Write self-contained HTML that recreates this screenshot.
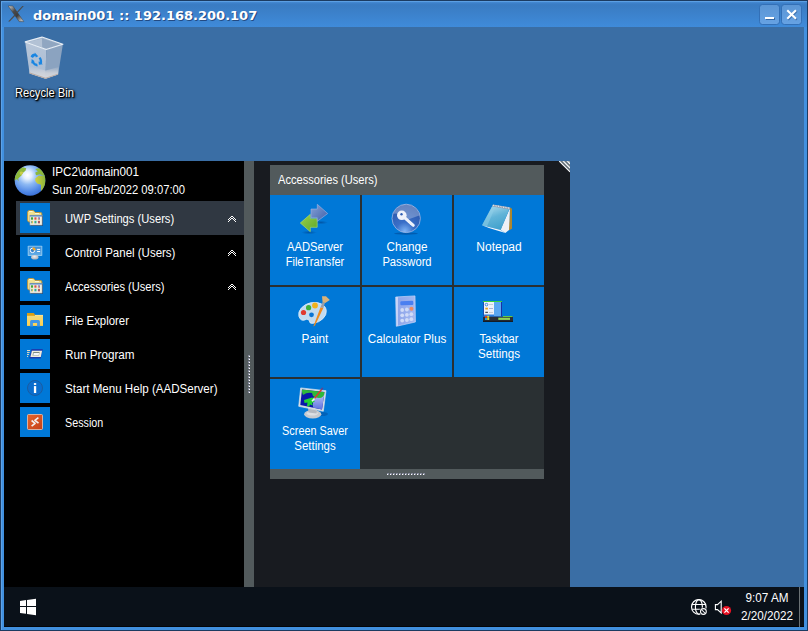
<!DOCTYPE html>
<html>
<head>
<meta charset="utf-8">
<title>domain001 :: 192.168.200.107</title>
<style>
html,body{margin:0;padding:0;}
body{width:808px;height:631px;position:relative;overflow:hidden;background:#1c3b61;font-family:"Liberation Sans",sans-serif;font-size:12px;color:#fff;}
.a{position:absolute;}
.t{white-space:nowrap;}
.c{text-align:center;}
#title{font-family:"DejaVu Sans","Liberation Sans",sans-serif;font-weight:bold;font-size:13px;text-shadow:1px 1px 0 rgba(25,55,105,.75);}
.sh{text-shadow:1px 1px 1px #000,1px 1px 2px #000,0 0 2px #000,1px 1px 3px rgba(0,0,0,.8);}
</style>
</head>
<body>
<div class="a" style="left:1px;top:1px;width:806px;height:629px;background:#5ea2e6;"></div>
<div class="a" style="left:2px;top:2px;width:805px;height:628px;background:#4190df;"></div>
<div class="a" style="left:2px;top:2px;width:805px;height:25px;background:linear-gradient(#4589d3 0px,#3a7dc5 2px,#3a7cc3 4px,#3f8bda 25px);"></div>
<div class="a" style="left:1px;top:1px;width:806px;height:1px;background:#5b9fe3;"></div>
<svg class="a" style="left:6px;top:4px;" width="20" height="20" viewBox="6 4 20 20"><defs><linearGradient id="xg" x1="0" y1="0" x2="1" y2="1"><stop offset="0" stop-color="#d8d8d8"/><stop offset=".35" stop-color="#4a4a4a"/><stop offset=".6" stop-color="#3c3c3c"/><stop offset="1" stop-color="#e0e0e0"/></linearGradient></defs>
<polygon points="8.2,6 12.8,6 23.8,21.6 19.2,21.6" fill="url(#xg)" stroke="#3c3c3c" stroke-width=".5"/>
<polygon points="22.3,6 23.8,6 17,13.4 16.3,12.5" fill="#4c4c4c"/>
<polygon points="14.6,14.6 15.5,15.6 9.7,21.6 8.2,21.6" fill="#4c4c4c"/></svg>
<div class="a t" id="title" style="left:33px;top:8px;line-height:16px;">domain001 :: 192.168.200.107</div>
<div class="a" style="left:759px;top:4px;width:19px;height:19px;background:linear-gradient(#5b96d5,#66a2e3);border:1px solid #3370b7;border-radius:3.5px;"></div>
<div class="a" style="left:781px;top:4px;width:19px;height:19px;background:linear-gradient(#5b96d5,#66a2e3);border:1px solid #3370b7;border-radius:3.5px;"></div>
<svg class="a" style="left:759px;top:4px;" width="44" height="22" viewBox="759 4 44 22"><rect x="766" y="18" width="9" height="2" fill="#26558f" opacity=".75"/><rect x="765" y="17" width="9" height="2" fill="#fff"/>
<path d="M788,10.9 L795.2,18.1 M795.2,10.9 L788,18.1" stroke="#26558f" stroke-width="2.1" stroke-linecap="square" opacity=".6" transform="translate(.8,.9)"/>
<path d="M788,10.9 L795.2,18.1 M795.2,10.9 L788,18.1" stroke="#fff" stroke-width="2.1" stroke-linecap="square"/></svg>
<div class="a" style="left:4px;top:27px;width:800px;height:600px;background:#3a6ea5;"></div>
<svg class="a" style="left:20px;top:32px;" width="50" height="52" viewBox="20 32 50 52"><defs>
<linearGradient id="rbL" x1="0" y1="0" x2="0" y2="1"><stop offset="0" stop-color="#b7c6d9"/><stop offset="1" stop-color="#a9bbd2"/></linearGradient>
</defs>
<polygon points="25.2,41.9 42,37.1 62.9,44.3 46.2,49.6" fill="#9fb3cb"/>
<polygon points="27.5,42.3 42,38.4 42.3,47.2 46.2,48.6" fill="#b3c2d5"/><polygon points="42,38.4 60.5,44.4 46.2,48.6 42.3,47.2" fill="#90a6c1"/>
<polygon points="25.2,41.9 46.2,49.6 45.6,78.8 29.6,73.4" fill="url(#rbL)"/>
<polygon points="46.2,49.6 62.9,44.3 58.1,74.6 45.6,78.8" fill="#8ba3c0"/>
<defs><linearGradient id="rbB" x1="0" y1="0" x2="0" y2="1"><stop offset="0" stop-color="#cfd3da" stop-opacity="0"/><stop offset=".55" stop-color="#cfd3da" stop-opacity=".9"/><stop offset="1" stop-color="#d6d8dc"/></linearGradient></defs><polygon points="29,66 45.7,70.5 58.6,67 58.1,74.6 45.6,78.8 29.6,73.4" fill="url(#rbB)"/>
<polygon points="29.8,72.6 45.6,77.8 58,73.8 58.1,74.6 45.6,78.8 29.6,73.4" fill="#b9a9a0"/>
<polygon points="25.2,41.9 42,37.1 62.9,44.3 46.2,49.6" fill="none" stroke="#e8eef5" stroke-width="1.1" stroke-linejoin="round"/>
<g fill="#1a86e2" transform="translate(36.3,60) skewY(17) scale(.98,1.04)"><polygon points="-5.75,-1.54 -5.49,-2.30 -5.13,-3.02 -4.67,-3.68 -4.13,-4.28 -3.52,-4.80 -2.84,-5.23 -2.11,-5.56 -1.34,-5.80 -1.59,-6.87 1.99,-4.26 -0.53,-2.29 -0.78,-3.36 -1.22,-3.23 -1.65,-3.03 -2.04,-2.78 -2.40,-2.48 -2.71,-2.14 -2.97,-1.75 -3.18,-1.33 -3.33,-0.89"/><polygon points="4.21,-4.21 4.74,-3.60 5.18,-2.93 5.53,-2.20 5.77,-1.44 5.91,-0.65 5.95,0.16 5.87,0.96 5.69,1.74 6.74,2.06 2.70,3.85 2.25,0.69 3.30,1.01 3.41,0.55 3.45,0.09 3.43,-0.38 3.35,-0.83 3.20,-1.28 3.00,-1.70 2.75,-2.09 2.44,-2.44"/><polygon points="1.54,5.75 0.75,5.90 -0.05,5.95 -0.85,5.89 -1.64,5.72 -2.40,5.45 -3.11,5.07 -3.76,4.61 -4.35,4.06 -5.16,4.81 -4.68,0.41 -1.72,1.60 -2.52,2.35 -2.18,2.67 -1.80,2.94 -1.39,3.16 -0.95,3.32 -0.50,3.41 -0.03,3.45 0.44,3.42 0.89,3.33"/></g></svg>
<div class="a t sh" style="left:14.6px;top:85px;line-height:16px;transform:scaleX(0.93);transform-origin:left top;">Recycle Bin</div>
<div class="a" style="left:4px;top:161px;width:240px;height:426px;background:#000;"></div>
<div class="a" style="left:244px;top:161px;width:10px;height:426px;background:#525a5c;"></div>
<div class="a" style="left:254px;top:161px;width:316px;height:426px;background:#181b20;"></div>
<svg class="a" style="left:558px;top:161px;" width="12" height="12" viewBox="558 161 12 12"><polygon points="559,161 570,161 570,172" fill="#8a959b"/>
<g stroke="#fff" stroke-width="1.05"><path d="M559.2,161.2 L570,172"/><path d="M563.3,161.2 L570,167.9"/><path d="M567.4,161.2 L570,163.8"/></g>
<g stroke="#5a656b" stroke-width="1"><path d="M561.3,161.2 L570,169.9"/><path d="M565.4,161.2 L570,165.8"/></g></svg>
<svg class="a" style="left:246px;top:350px;shape-rendering:crispEdges;" width="6" height="48" viewBox="246 350 6 48"><rect x="248" y="355" width="2" height="2" fill="#868a9c"/><rect x="249" y="356" width="1" height="1" fill="#fff"/><rect x="248" y="358" width="2" height="2" fill="#868a9c"/><rect x="249" y="359" width="1" height="1" fill="#fff"/><rect x="248" y="361" width="2" height="2" fill="#868a9c"/><rect x="249" y="362" width="1" height="1" fill="#fff"/><rect x="248" y="364" width="2" height="2" fill="#868a9c"/><rect x="249" y="365" width="1" height="1" fill="#fff"/><rect x="248" y="367" width="2" height="2" fill="#868a9c"/><rect x="249" y="368" width="1" height="1" fill="#fff"/><rect x="248" y="370" width="2" height="2" fill="#868a9c"/><rect x="249" y="371" width="1" height="1" fill="#fff"/><rect x="248" y="373" width="2" height="2" fill="#868a9c"/><rect x="249" y="374" width="1" height="1" fill="#fff"/><rect x="248" y="376" width="2" height="2" fill="#868a9c"/><rect x="249" y="377" width="1" height="1" fill="#fff"/><rect x="248" y="379" width="2" height="2" fill="#868a9c"/><rect x="249" y="380" width="1" height="1" fill="#fff"/><rect x="248" y="382" width="2" height="2" fill="#868a9c"/><rect x="249" y="383" width="1" height="1" fill="#fff"/><rect x="248" y="385" width="2" height="2" fill="#868a9c"/><rect x="249" y="386" width="1" height="1" fill="#fff"/><rect x="248" y="388" width="2" height="2" fill="#868a9c"/><rect x="249" y="389" width="1" height="1" fill="#fff"/><rect x="248" y="391" width="2" height="2" fill="#868a9c"/><rect x="249" y="392" width="1" height="1" fill="#fff"/></svg>
<svg class="a" style="left:13px;top:163px;" width="36" height="36" viewBox="13 163 36 36"><defs><radialGradient id="gl" cx=".42" cy=".32" r=".75"><stop offset="0" stop-color="#ffffff"/><stop offset=".18" stop-color="#e4effd"/><stop offset=".42" stop-color="#8db9f3"/><stop offset=".75" stop-color="#4f87e6"/><stop offset="1" stop-color="#3166cf"/></radialGradient>
<linearGradient id="af" x1="0" y1="0" x2="1" y2="0"><stop offset="0" stop-color="#d2cf3e"/><stop offset="1" stop-color="#86b33a"/></linearGradient>
<clipPath id="gc"><circle cx="30" cy="180.500" r="15.300"/></clipPath></defs>
<circle cx="30" cy="180.500" r="15.300" fill="url(#gl)"/>
<g clip-path="url(#gc)">
<path d="M14,178 L16.300,174 Q18,169 22.700,167.300 L26.200,168.200 L25.500,170.800 L23.300,172.400 Q22,174 21.100,175.800 Q19.500,177.500 18.200,178.400 L18.600,181.500 L17,179 L14,181z" fill="#8db83a"/>
<path d="M19.500,173 Q21,170.500 23.300,172.400 Q22,174 21.100,175.800z" fill="#c9cc45"/>
<path d="M35.300,168.900 L39.800,167.900 L44,171 L46,176.500 L39.800,174.300 L36,175.200 L35.300,172.400 L37.900,171.400z" fill="#8db83a"/>
<path d="M35.300,178.400 L38.500,175.800 L46,175.500 L46,187 L41,193 L41,184.700 L37.200,183.400 L35.300,180.900z" fill="url(#af)"/>
</g></svg>
<div class="a t " style="left:52px;top:164px;line-height:16px;transform:scaleX(0.973);transform-origin:left top;">IPC2\domain001</div>
<div class="a t " style="left:52px;top:182px;line-height:16px;transform:scaleX(0.936);transform-origin:left top;">Sun 20/Feb/2022 09:07:00</div>
<div class="a" style="left:16px;top:201px;width:228px;height:34px;background:#303842;"></div>
<div class="a" style="left:20px;top:203px;width:30px;height:30px;background:#0078d7;"></div>
<div class="a t " style="left:65px;top:211px;line-height:16px;transform:scaleX(0.932);transform-origin:left top;">UWP Settings (Users)</div>
<div class="a" style="left:20px;top:237px;width:30px;height:30px;background:#0078d7;"></div>
<div class="a t " style="left:65px;top:245px;line-height:16px;transform:scaleX(0.957);transform-origin:left top;">Control Panel (Users)</div>
<div class="a" style="left:20px;top:271px;width:30px;height:30px;background:#0078d7;"></div>
<div class="a t " style="left:65px;top:279px;line-height:16px;transform:scaleX(0.927);transform-origin:left top;">Accessories (Users)</div>
<div class="a" style="left:20px;top:305px;width:30px;height:30px;background:#0078d7;"></div>
<div class="a t " style="left:65px;top:313px;line-height:16px;transform:scaleX(0.95);transform-origin:left top;">File Explorer</div>
<div class="a" style="left:20px;top:339px;width:30px;height:30px;background:#0078d7;"></div>
<div class="a t " style="left:65px;top:347px;line-height:16px;transform:scaleX(0.975);transform-origin:left top;">Run Program</div>
<div class="a" style="left:20px;top:373px;width:30px;height:30px;background:#0078d7;"></div>
<div class="a t " style="left:65px;top:381px;line-height:16px;transform:scaleX(0.965);transform-origin:left top;">Start Menu Help (AADServer)</div>
<div class="a" style="left:20px;top:407px;width:30px;height:30px;background:#0078d7;"></div>
<div class="a t " style="left:65px;top:415px;line-height:16px;transform:scaleX(0.895);transform-origin:left top;">Session</div>
<svg class="a" style="left:226px;top:210px;shape-rendering:crispEdges;" width="12" height="90" viewBox="226 210 12 90"><g fill="#fff"><rect x="231" y="216" width="1" height="1"/><rect x="232" y="216" width="1" height="1"/><rect x="230" y="217" width="1" height="1"/><rect x="233" y="217" width="1" height="1"/><rect x="229" y="218" width="1" height="1"/><rect x="231" y="218" width="1" height="1"/><rect x="232" y="218" width="1" height="1"/><rect x="234" y="218" width="1" height="1"/><rect x="228" y="219" width="1" height="1"/><rect x="230" y="219" width="1" height="1"/><rect x="233" y="219" width="1" height="1"/><rect x="235" y="219" width="1" height="1"/><rect x="229" y="220" width="1" height="1"/><rect x="234" y="220" width="1" height="1"/><rect x="228" y="221" width="1" height="1"/><rect x="235" y="221" width="1" height="1"/><rect x="231" y="250" width="1" height="1"/><rect x="232" y="250" width="1" height="1"/><rect x="230" y="251" width="1" height="1"/><rect x="233" y="251" width="1" height="1"/><rect x="229" y="252" width="1" height="1"/><rect x="231" y="252" width="1" height="1"/><rect x="232" y="252" width="1" height="1"/><rect x="234" y="252" width="1" height="1"/><rect x="228" y="253" width="1" height="1"/><rect x="230" y="253" width="1" height="1"/><rect x="233" y="253" width="1" height="1"/><rect x="235" y="253" width="1" height="1"/><rect x="229" y="254" width="1" height="1"/><rect x="234" y="254" width="1" height="1"/><rect x="228" y="255" width="1" height="1"/><rect x="235" y="255" width="1" height="1"/><rect x="231" y="284" width="1" height="1"/><rect x="232" y="284" width="1" height="1"/><rect x="230" y="285" width="1" height="1"/><rect x="233" y="285" width="1" height="1"/><rect x="229" y="286" width="1" height="1"/><rect x="231" y="286" width="1" height="1"/><rect x="232" y="286" width="1" height="1"/><rect x="234" y="286" width="1" height="1"/><rect x="228" y="287" width="1" height="1"/><rect x="230" y="287" width="1" height="1"/><rect x="233" y="287" width="1" height="1"/><rect x="235" y="287" width="1" height="1"/><rect x="229" y="288" width="1" height="1"/><rect x="234" y="288" width="1" height="1"/><rect x="228" y="289" width="1" height="1"/><rect x="235" y="289" width="1" height="1"/></g></svg>
<svg class="a" style="left:20px;top:203px;" width="30" height="236" viewBox="20 203 30 236"><g transform="translate(27,210)">
<path d="M0.6,2.3 q0,-1.8 1.8,-1.8 h3.4 q1,0 1.6,.9 l.9,1.200 h5.300 q1.200,0 1.200,1.200 v8.200 h-12.400 q-1.800,0 -1.800,-1.800z" fill="#f1e292" stroke="#c4922c" stroke-width=".9"/>
<path d="M2.200,1.500 h3.300 M8,3.500 h4" stroke="#fffbe0" stroke-width=".9"/>
<rect x="3.700" y="6" width="12.200" height="10" fill="#2b3b55" opacity=".7"/>
<rect x="2.900" y="5.200" width="12.200" height="9.900" fill="#f3f0e2"/>
<rect x="2.900" y="5.200" width="12.200" height="1.300" fill="#3f7fce"/>
<rect x="2.900" y="5.200" width="12.200" height="9.900" fill="none" stroke="#7e8a9a" stroke-width=".5"/>
<rect x="4" y="7.300" width="2.100" height="2.400" fill="#3fa436"/><rect x="7.400" y="7.300" width="2.100" height="2.400" fill="#d8544a"/><rect x="10.900" y="7.300" width="2.100" height="2.400" fill="#8a6fc8"/><rect x="10.900" y="8.500" width="1.200" height="1.200" fill="#e8c040"/>
<rect x="4" y="10.800" width="2.100" height="2.600" fill="#e8c44a"/><rect x="4" y="11.500" width="1.200" height="1.200" fill="#3f9fd8"/><rect x="7.400" y="10.800" width="2.100" height="2.600" fill="#3f9fd8"/><rect x="7.800" y="11.400" width="1.300" height="1.400" fill="#3fc04a"/><rect x="10.900" y="10.800" width="2.100" height="2.600" fill="#e0603a"/><rect x="11.300" y="11.600" width="1.100" height="1.200" fill="#2f5fc8"/>
</g><g transform="translate(27,244)">
<defs><linearGradient id="cpg" x1="0" y1="0" x2="0" y2="1"><stop offset="0" stop-color="#3f8ed8"/><stop offset="1" stop-color="#62ace6"/></linearGradient>
<radialGradient id="cpb" cx=".45" cy=".35" r=".7"><stop offset="0" stop-color="#eceef2"/><stop offset="1" stop-color="#a4a8b0"/></radialGradient></defs>
<rect x=".7" y="1.700" width="14.600" height="10.300" rx=".8" fill="#8cc6ee"/>
<rect x="1.700" y="2.700" width="12.600" height="8.300" fill="url(#cpg)"/>
<circle cx="5.500" cy="6.400" r="2.200" fill="#2f7fd0" stroke="#fff" stroke-width="1"/><path d="M5.700,6.200 v-3 a3,3 0 0 1 3,3z" fill="#f5a623"/>
<rect x="10.100" y="4.900" width="3" height="1" fill="#fff"/><rect x="10.100" y="7" width="3" height="1" fill="#fff"/>
<ellipse cx="7.800" cy="13.300" rx="3.700" ry="2.300" fill="url(#cpb)"/>
</g><g transform="translate(27,278)">
<path d="M0.6,2.3 q0,-1.8 1.8,-1.8 h3.4 q1,0 1.6,.9 l.9,1.200 h5.300 q1.200,0 1.200,1.200 v8.200 h-12.400 q-1.800,0 -1.800,-1.800z" fill="#f1e292" stroke="#c4922c" stroke-width=".9"/>
<path d="M2.200,1.500 h3.300 M8,3.500 h4" stroke="#fffbe0" stroke-width=".9"/>
<rect x="3.700" y="6" width="12.200" height="10" fill="#2b3b55" opacity=".7"/>
<rect x="2.900" y="5.200" width="12.200" height="9.900" fill="#f3f0e2"/>
<rect x="2.900" y="5.200" width="12.200" height="1.300" fill="#3f7fce"/>
<rect x="2.900" y="5.200" width="12.200" height="9.900" fill="none" stroke="#7e8a9a" stroke-width=".5"/>
<rect x="4" y="7.300" width="2.100" height="2.400" fill="#3fa436"/><rect x="7.400" y="7.300" width="2.100" height="2.400" fill="#d8544a"/><rect x="10.900" y="7.300" width="2.100" height="2.400" fill="#8a6fc8"/><rect x="10.900" y="8.500" width="1.200" height="1.200" fill="#e8c040"/>
<rect x="4" y="10.800" width="2.100" height="2.600" fill="#e8c44a"/><rect x="4" y="11.500" width="1.200" height="1.200" fill="#3f9fd8"/><rect x="7.400" y="10.800" width="2.100" height="2.600" fill="#3f9fd8"/><rect x="7.800" y="11.400" width="1.300" height="1.400" fill="#3fc04a"/><rect x="10.900" y="10.800" width="2.100" height="2.600" fill="#e0603a"/><rect x="11.300" y="11.600" width="1.100" height="1.200" fill="#2f5fc8"/>
</g><g transform="translate(27,312)">
<defs><linearGradient id="feg" x1="0" y1="0" x2="0" y2="1"><stop offset="0" stop-color="#f1d97c"/><stop offset="1" stop-color="#ffd24f"/></linearGradient></defs>
<path d="M0,1 h6.800 l1.400,1.900 h7.800 v1.500 h-16z" fill="#d99f14"/>
<rect x="0" y="3.800" width="16" height="10.100" fill="url(#feg)"/>
<rect x="8" y="2.900" width="8" height="1" fill="#ffe79a"/>
<path d="M3.100,14.600 v-5 q0,-1.500 1.500,-1.500 h6.800 q1.500,0 1.500,1.500 v5 h-2.800 v-3.700 h-4.200 v3.700z" fill="#3f97ea"/>
<rect x="3.100" y="13.900" width="2.800" height=".7" fill="#2b7fd0"/><rect x="10.100" y="13.900" width="2.800" height=".7" fill="#2b7fd0"/>
</g><g transform="translate(27,346)">
<polygon points="4.500,3.100 15.800,3.100 13.700,12.500 2.200,12.500" fill="#1a3cb0"/>
<polygon points="4.900,4.800 15.100,4.800 13.800,11 3.400,11" fill="#f1ecdc"/>
<polygon points="6.300,5.900 12.600,5.900 11.900,9.600 5.500,9.600" fill="#7f8c84"/>
<polygon points="6.700,7.100 12.100,7.100 11.700,9.200 6.300,9.200" fill="#f4f6fc"/>
<rect x="0" y="4" width="3" height="1" fill="#e6dcc2"/><rect x="0" y="5.900" width="2.600" height="1" fill="#e6dcc2"/><rect x="0" y="7.900" width="2" height="1" fill="#e6dcc2"/><rect x="0" y="9.900" width="1.100" height="1" fill="#e6dcc2"/>
</g><g transform="translate(27,380)">
<circle cx="8" cy="8" r="7.500" fill="#0a6dcd" stroke="#1c5a9c" stroke-width=".9"/>
<rect x="6.900" y="6.100" width="2.300" height="6.900" fill="#fff"/><rect x="6.900" y="3.100" width="2.300" height="1.800" fill="#fff"/>
</g><g transform="translate(27,414)">
<defs><linearGradient id="sg" x1="0" y1="0" x2="1" y2="1"><stop offset="0" stop-color="#e4652c"/><stop offset="1" stop-color="#c5401a"/></linearGradient></defs>
<rect x=".5" y=".5" width="15" height="15" rx="1" fill="url(#sg)" stroke="#f3c4ac" stroke-width=".8"/>
<path d="M4.6,6.5 L8.1,9.3 L4.6,12.1" stroke="#f3efee" stroke-width="1.65" fill="none" stroke-linejoin="round"/>
<path d="M11.4,3.7 L7.9,6.3 L11.5,9.1" stroke="#f3efee" stroke-width="1.65" fill="none" stroke-linejoin="round"/>
</g></svg>
<div class="a" style="left:270px;top:165px;width:274px;height:30px;background:#525a5c;"></div>
<div class="a t " style="left:278px;top:172px;line-height:16px;transform:scaleX(0.927);transform-origin:left top;">Accessories (Users)</div>
<div class="a" style="left:270px;top:195px;width:274px;height:274px;background:#2a3033;"></div>
<div class="a" style="left:270px;top:469px;width:274px;height:10px;background:#525a5c;"></div>
<svg class="a" style="left:384px;top:470px;shape-rendering:crispEdges;" width="46" height="8" viewBox="384 470 46 8"><rect x="387" y="473" width="2" height="2" fill="#868a9c"/><rect x="387" y="474" width="1" height="1" fill="#fff"/><rect x="390" y="473" width="2" height="2" fill="#868a9c"/><rect x="390" y="474" width="1" height="1" fill="#fff"/><rect x="393" y="473" width="2" height="2" fill="#868a9c"/><rect x="393" y="474" width="1" height="1" fill="#fff"/><rect x="396" y="473" width="2" height="2" fill="#868a9c"/><rect x="396" y="474" width="1" height="1" fill="#fff"/><rect x="399" y="473" width="2" height="2" fill="#868a9c"/><rect x="399" y="474" width="1" height="1" fill="#fff"/><rect x="402" y="473" width="2" height="2" fill="#868a9c"/><rect x="402" y="474" width="1" height="1" fill="#fff"/><rect x="405" y="473" width="2" height="2" fill="#868a9c"/><rect x="405" y="474" width="1" height="1" fill="#fff"/><rect x="408" y="473" width="2" height="2" fill="#868a9c"/><rect x="408" y="474" width="1" height="1" fill="#fff"/><rect x="411" y="473" width="2" height="2" fill="#868a9c"/><rect x="411" y="474" width="1" height="1" fill="#fff"/><rect x="414" y="473" width="2" height="2" fill="#868a9c"/><rect x="414" y="474" width="1" height="1" fill="#fff"/><rect x="417" y="473" width="2" height="2" fill="#868a9c"/><rect x="417" y="474" width="1" height="1" fill="#fff"/><rect x="420" y="473" width="2" height="2" fill="#868a9c"/><rect x="420" y="474" width="1" height="1" fill="#fff"/><rect x="423" y="473" width="2" height="2" fill="#868a9c"/><rect x="423" y="474" width="1" height="1" fill="#fff"/></svg>
<div class="a" style="left:270px;top:195px;width:90px;height:90px;background:#0078d7;"></div>
<div class="a t c" style="left:270px;top:240px;width:90px;line-height:15px;transform:scaleX(0.933);transform-origin:center top;">AADServer</div>
<div class="a t c" style="left:270px;top:255px;width:90px;line-height:15px;transform:scaleX(0.922);transform-origin:center top;">FileTransfer</div>
<div class="a" style="left:362px;top:195px;width:90px;height:90px;background:#0078d7;"></div>
<div class="a t c" style="left:362px;top:240px;width:90px;line-height:15px;transform:scaleX(0.975);transform-origin:center top;">Change</div>
<div class="a t c" style="left:362px;top:255px;width:90px;line-height:15px;transform:scaleX(0.934);transform-origin:center top;">Password</div>
<div class="a" style="left:454px;top:195px;width:90px;height:90px;background:#0078d7;"></div>
<div class="a t c" style="left:454px;top:240px;width:90px;line-height:15px;transform:scaleX(1.0);transform-origin:center top;">Notepad</div>
<div class="a" style="left:270px;top:287px;width:90px;height:90px;background:#0078d7;"></div>
<div class="a t c" style="left:270px;top:332px;width:90px;line-height:15px;transform:scaleX(0.98);transform-origin:center top;">Paint</div>
<div class="a" style="left:362px;top:287px;width:90px;height:90px;background:#0078d7;"></div>
<div class="a t c" style="left:362px;top:332px;width:90px;line-height:15px;transform:scaleX(0.974);transform-origin:center top;">Calculator Plus</div>
<div class="a" style="left:454px;top:287px;width:90px;height:90px;background:#0078d7;"></div>
<div class="a t c" style="left:454px;top:332px;width:90px;line-height:15px;transform:scaleX(0.928);transform-origin:center top;">Taskbar</div>
<div class="a t c" style="left:454px;top:347px;width:90px;line-height:15px;transform:scaleX(0.969);transform-origin:center top;">Settings</div>
<div class="a" style="left:270px;top:379px;width:90px;height:90px;background:#0078d7;"></div>
<div class="a t c" style="left:270px;top:424px;width:90px;line-height:15px;transform:scaleX(0.905);transform-origin:center top;">Screen Saver</div>
<div class="a t c" style="left:270px;top:439px;width:90px;line-height:15px;transform:scaleX(0.955);transform-origin:center top;">Settings</div>
<svg class="a" style="left:290px;top:198px;" width="50" height="42" viewBox="290 198 50 42"><defs>
<linearGradient id="ab" x1="0" y1="0" x2="1" y2="1"><stop offset="0" stop-color="#86a2d6"/><stop offset="1" stop-color="#3f60aa"/></linearGradient>
<linearGradient id="ag" x1="0" y1="0" x2="1" y2="1"><stop offset="0" stop-color="#9ad04a"/><stop offset="1" stop-color="#5fa82a"/></linearGradient>
<radialGradient id="shd"><stop offset="0" stop-color="#003a80" stop-opacity=".55"/><stop offset="1" stop-color="#003a80" stop-opacity="0"/></radialGradient></defs>
<ellipse cx="321" cy="222.5" rx="7" ry="1.8" fill="url(#shd)"/><ellipse cx="309" cy="232.5" rx="8" ry="1.8" fill="url(#shd)"/>
<polygon points="300.3,223 310.3,214.3 310.3,218.7 317.2,218.7 317.2,227.3 310.3,227.3 310.3,231.7" fill="url(#ag)" stroke="#b4e070" stroke-width=".6"/>
<polygon points="311,209 317.3,209 317.3,204.3 327.7,213.5 317.3,221.3 317.3,217.7 311,217.7" fill="url(#ab)" stroke="#9fb4e0" stroke-width=".6"/></svg>
<svg class="a" style="left:382px;top:198px;" width="50" height="42" viewBox="382 198 50 42"><defs>
<radialGradient id="kc" cx=".45" cy=".95" r=".9"><stop offset="0" stop-color="#7fb4f5"/><stop offset=".35" stop-color="#3a6fc8"/><stop offset="1" stop-color="#2a55a8"/></radialGradient>
<clipPath id="kcl"><circle cx="406.2" cy="218.4" r="13.8"/></clipPath></defs>
<ellipse cx="406" cy="233.5" rx="12" ry="1.2" fill="#003a80" opacity=".45"/>
<circle cx="406.2" cy="218.4" r="14.2" fill="url(#kc)" stroke="#9db8e6" stroke-width=".8"/>
<g clip-path="url(#kcl)"><path d="M392,214 q2,-9 14,-11 q12,0 15,12 l-13,4.5 q-8,-8 -16,-5.500z" fill="#fff" opacity=".28"/></g>
<path d="M402,215.300 L413.300,225.300" stroke="#eef2fb" stroke-width="3" stroke-linecap="round"/>
<path d="M410.300,224.500 l1.300,-1.300 M408.500,222.800 l1.100,-1.100" stroke="#eef2fb" stroke-width="1.600"/>
<circle cx="401.800" cy="215.300" r="4.800" fill="#eef2fb"/><circle cx="401.500" cy="214.300" r="1.200" fill="#2f5fb5"/></svg>
<svg class="a" style="left:474px;top:198px;" width="50" height="42" viewBox="474 198 50 42"><defs><linearGradient id="np" x1=".2" y1="0" x2=".6" y2="1"><stop offset="0" stop-color="#b5dff0"/><stop offset=".5" stop-color="#62b4d8"/><stop offset="1" stop-color="#3fa0cc"/></linearGradient></defs>
<polygon points="510,207.500 512,208.700 512,228.700 508.700,230.500" fill="#ad862e"/>
<polygon points="510,208 509,230 505.300,233 500.500,229.800" fill="#eef1f6"/>
<polygon points="493,204.700 510,207.600 500.700,230 482,225.300" fill="url(#np)"/>
<polygon points="493,204.700 496,205.200 487,226.600 482,225.300" fill="#8fd0ea" opacity=".5"/>
<polygon points="482,225.300 500.700,230 505.300,233 489,228" fill="#f4f6fa"/>
<polygon points="493,204.500 510.200,207.400 509.700,209.600 492.200,206.600" fill="#8e9aac"/><path d="M493,205.400 L510,208.300" stroke="#e6eaf0" stroke-width="1.300" stroke-dasharray="0.900,0.800"/></svg>
<svg class="a" style="left:290px;top:290px;" width="50" height="42" viewBox="290 290 50 42"><g transform="rotate(-14 312.300 313)"><path d="M298.500,313 a14,10.300 0 1 1 12,10.200 q-3.500,-.3 -3,-3 q.3,-2.500 -2.500,-2.500 q-6,1.500 -6.500,-4.700z" fill="#c2dbf0" stroke="#dcecf8" stroke-width=".8"/></g>
<circle cx="311.500" cy="314.800" r="2.400" fill="#0a74d4"/>
<circle cx="303.500" cy="312.500" r="2.600" fill="#e0392f"/><circle cx="308.600" cy="307.700" r="2.600" fill="#3fb03a"/><circle cx="315" cy="305.500" r="2.900" fill="#f2b21c"/>
<polygon points="313.300,326.600 320.500,307.200 323.300,308 315,325.500" fill="#f08a1c"/>
<polygon points="320.500,307.200 322.600,302 325,302.800 323.300,308" fill="#9a9fa8"/>
<polygon points="322.600,302.300 322,296.300 326,296.300 329.800,300 325.200,303" fill="#d8b27a"/></svg>
<svg class="a" style="left:382px;top:290px;" width="50" height="42" viewBox="382 290 50 42"><defs><linearGradient id="cb" x1="0" y1="0" x2="1" y2="0"><stop offset="0" stop-color="#cdd8f8"/><stop offset=".1" stop-color="#c5d1f6"/><stop offset=".14" stop-color="#8ea6ea"/><stop offset="1" stop-color="#a3b8f0"/></linearGradient></defs>
<polygon points="395.700,297 415,295.900 415.400,322 396.300,326.300" fill="url(#cb)" stroke="#c9d6f8" stroke-width=".7"/>
<rect x="400.300" y="301" width="13" height="4.200" rx="1.200" fill="#4a7ff0" transform="rotate(-2 406 303)"/>
<g fill="#d0dbf7"><circle cx="402.200" cy="310" r="1.900"/><circle cx="406.900" cy="309.500" r="1.900"/>
<circle cx="402.200" cy="315.300" r="1.900"/><circle cx="406.900" cy="314.800" r="1.900"/><circle cx="411.300" cy="314.200" r="1.900"/>
<circle cx="402.200" cy="320.600" r="1.900"/><circle cx="406.900" cy="320" r="1.900"/><circle cx="411.300" cy="319.200" r="1.900"/></g>
<circle cx="411.500" cy="308.800" r="2" fill="#ef8a62"/></svg>
<svg class="a" style="left:474px;top:290px;" width="50" height="42" viewBox="474 290 50 42"><rect x="483" y="301" width="19" height="16" fill="#2d7fe0"/>
<rect x="483" y="301" width="19" height="1" fill="#3fd23a"/>
<rect x="484" y="302" width="10" height="12.500" fill="#eef2fa"/>
<rect x="494" y="302" width="7.500" height="14" fill="#5aa7f2"/>
<circle cx="486.500" cy="304.600" r="1.300" fill="none" stroke="#1a6fd8" stroke-width=".8"/><rect x="485.300" y="307.700" width="2.600" height="1.800" fill="#e8a420"/><rect x="485.300" y="311.800" width="2.600" height="1" fill="#20242c"/>
<rect x="489" y="304" width="4" height="1" fill="#c8ccd6"/><rect x="489" y="308" width="4" height="1" fill="#a9b4d6"/><rect x="489" y="312" width="4" height="1" fill="#c8ccd6"/>
<rect x="483" y="316.700" width="30" height="5" fill="#2a3038"/><rect x="483" y="320.700" width="30" height="1.200" fill="#14181e"/>
<rect x="498.300" y="317.700" width="11.700" height="2.200" fill="#8fd45a"/><rect x="501" y="302" width="1" height="14.500" fill="#1c2fa4"/><rect x="483" y="302" width="1" height="14.500" fill="#1c4fb4"/><rect x="503" y="316" width="9.500" height=".9" fill="#6fd23a"/>
<rect x="485" y="315.800" width="2" height="2" fill="#e8402a"/><rect x="487.200" y="315.800" width="2" height="2" fill="#e8d820"/><rect x="485" y="318" width="2" height="2" fill="#1a9af0"/><rect x="487.200" y="318" width="2" height="2" fill="#e8d820"/></svg>
<svg class="a" style="left:290px;top:382px;" width="50" height="42" viewBox="290 382 50 42"><defs><clipPath id="scr"><polygon points="302,389.600 324.500,392 322,409.600 300.300,405"/></clipPath>
<linearGradient id="sl" x1="0" y1="0" x2="0" y2="1"><stop offset="0" stop-color="#c9cdf5"/><stop offset="1" stop-color="#5a6fe0"/></linearGradient></defs>
<ellipse cx="322" cy="414" rx="6" ry="2" fill="#003a80" opacity=".35"/>
<ellipse cx="312.700" cy="414.200" rx="8.600" ry="4.200" fill="#c6cacf"/><ellipse cx="312.300" cy="413.300" rx="5.500" ry="2.300" fill="#dcdfe3"/><polygon points="308,408 317,410 316.500,413.500 308.500,412.500" fill="#b4b9c0"/>
<polygon points="300.700,387.900 326,390.700 323.300,411.300 298.700,406.300" fill="#d4d8de" stroke="#eceef2" stroke-width=".6"/>
<g clip-path="url(#scr)"><rect x="298" y="386" width="30" height="26" fill="#0a18a8"/>
<polygon points="313,398 325,392 323,410 313,408" fill="url(#sl)"/>
<path d="M301,389 L325,392 q-1,6 -6,6 q-4,0 -6,-2 l-1,-3 q-5,-1 -9,2z" fill="#2fb83a"/>
<path d="M304,400 l8,-2.500 3,1 -2,2 2,1 -3,1.500 1,2.500 -3,-1 -1,2.500 -2,-1 .5,-3.500 -3,.5z" fill="#22d232"/></g>
<path d="M322.700,388 L314.500,398.400" stroke="#e03a2a" stroke-width="1.500"/><path d="M322.700,388 l-1.200,1.600" stroke="#3a4ab0" stroke-width="1.500"/>
<path d="M314.500,398.400 L312,401.300" stroke="#f4f4f8" stroke-width="1.600"/></svg>
<div class="a" style="left:4px;top:587px;width:800px;height:40px;background:#0a1119;"></div>
<div class="a" style="left:4px;top:626px;width:800px;height:1px;background:#03060a;"></div>
<div class="a" style="left:799px;top:587px;width:1px;height:40px;background:#6b7275;"></div>
<svg class="a" style="left:18px;top:597px;" width="20" height="20" viewBox="18 597 20 20"><g fill="#fff"><polygon points="20,600.9 26,600.05 26,606 20,606"/><polygon points="27,599.9 36,598.7 36,606 27,606"/>
<polygon points="20,607 26,607 26,613.85 20,613"/><polygon points="27,607 36,607 36,615.2 27,614"/></g></svg>
<svg class="a" style="left:688px;top:597px;" width="22" height="20" viewBox="688 597 22 20"><g fill="none" stroke="#fff" stroke-width="1.15"><circle cx="698.8" cy="606.9" r="7.3"/><ellipse cx="698.9" cy="606.9" rx="3.5" ry="7.3"/><path d="M692.1,604.5 h13.4 M692.1,609.2 h8.4"/></g>
<circle cx="703.4" cy="611.5" r="4" fill="#0a1119"/><circle cx="703.4" cy="611.5" r="2.9" fill="none" stroke="#fff" stroke-width="1.05"/><path d="M701.4,609.5 l4,4" stroke="#fff" stroke-width="1.05"/></svg>
<svg class="a" style="left:712px;top:597px;" width="22" height="20" viewBox="712 597 22 20"><path d="M715.4,604.6 h2.1 l3.7,-3.4 v11.8 l-3.7,-3.4 h-2.1z" fill="none" stroke="#fff" stroke-width="1.1" stroke-linejoin="miter"/>
<circle cx="726.5" cy="610.5" r="4.6" fill="#e81123"/><path d="M724.4,608.4 l4.2,4.2 M728.6,608.4 l-4.2,4.2" stroke="#fff" stroke-width="1.3"/></svg>
<div class="a t c" style="left:727px;top:590px;width:80px;line-height:16px;transform:scaleX(0.977);transform-origin:center top;">9:07 AM</div>
<div class="a t c" style="left:727px;top:608px;width:80px;line-height:16px;transform:scaleX(0.974);transform-origin:center top;">2/20/2022</div>
</body>
</html>
